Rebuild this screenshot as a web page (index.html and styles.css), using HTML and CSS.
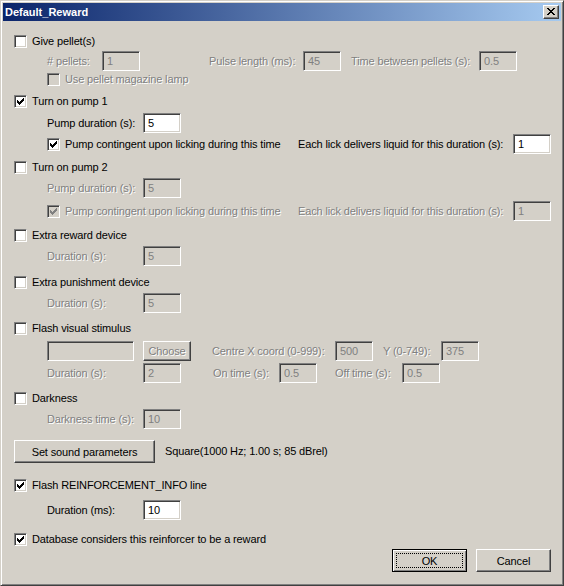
FILE: index.html
```html
<!DOCTYPE html>
<html>
<head>
<meta charset="utf-8">
<title>Default_Reward</title>
<link rel="stylesheet" href="styles.css">
</head>
<body>
<div class="window">
  <div class="titlebar">
    <span class="title">Default_Reward</span>
    <span class="close"><svg width="14" height="12" viewBox="0 0 14 12"><path d="M3 2h2v1h-2z M9 2h2v1h-2z M4 3h2v1h-2z M8 3h2v1h-2z M5 4h4v1h-4z M6 5h2v1h-2z M5 6h4v1h-4z M4 7h2v1h-2z M8 7h2v1h-2z M3 8h2v1h-2z M9 8h2v1h-2z" fill="#000"/></svg></span>
  </div>
  <div class="content">
    <div class="row crow mt14"><span class="cb"></span><span class="cl">Give pellet(s)</span></div>
    <div class="row frow mt3 ind">
      <span class="lbl dis-t w55"># pellets:</span><span class="edit dis">1</span>
      <span class="lbl dis-t ml69 w94">Pulse length (ms):</span><span class="edit dis">45</span>
      <span class="lbl dis-t ml10 w128">Time between pellets (s):</span><span class="edit dis">0.5</span>
    </div>
    <div class="row crow mt2 ind"><span class="cb dis"></span><span class="cl dis-t">Use pellet magazine lamp</span></div>

    <div class="row crow mt9"><span class="cb"><svg class="tick" width="11" height="11" viewBox="0 0 11 11"><path d="M8 2h1v1h-1z M7 3h2v1h-2z M2 4h1v1h-1z M6 4h3v1h-3z M2 5h2v1h-2z M5 5h3v1h-3z M2 6h5v1h-5z M3 7h3v1h-3z M4 8h1v1h-1z"/></svg></span><span class="cl">Turn on pump 1</span></div>
    <div class="row frow mt5 ind"><span class="lbl w96">Pump duration (s):</span><span class="edit">5</span></div>
    <div class="row frow mt1 ind">
      <span class="cb"><svg class="tick" width="11" height="11" viewBox="0 0 11 11"><path d="M8 2h1v1h-1z M7 3h2v1h-2z M2 4h1v1h-1z M6 4h3v1h-3z M2 5h2v1h-2z M5 5h3v1h-3z M2 6h5v1h-5z M3 7h3v1h-3z M4 8h1v1h-1z"/></svg></span><span class="cl w233">Pump contingent upon licking during this time</span>
      <span class="lbl w215">Each lick delivers liquid for this duration (s):</span><span class="edit">1</span>
    </div>

    <div class="row crow mt7"><span class="cb"></span><span class="cl">Turn on pump 2</span></div>
    <div class="row frow mt4 ind"><span class="lbl dis-t w96">Pump duration (s):</span><span class="edit dis">5</span></div>
    <div class="row frow mt3 ind">
      <span class="cb dis"><svg class="tick grey" width="11" height="11" viewBox="0 0 11 11"><path d="M8 2h1v1h-1z M7 3h2v1h-2z M2 4h1v1h-1z M6 4h3v1h-3z M2 5h2v1h-2z M5 5h3v1h-3z M2 6h5v1h-5z M3 7h3v1h-3z M4 8h1v1h-1z"/></svg></span><span class="cl dis-t w233">Pump contingent upon licking during this time</span>
      <span class="lbl dis-t w215">Each lick delivers liquid for this duration (s):</span><span class="edit dis">1</span>
    </div>

    <div class="row crow mt8"><span class="cb"></span><span class="cl">Extra reward device</span></div>
    <div class="row frow mt4 ind"><span class="lbl dis-t w96">Duration (s):</span><span class="edit dis">5</span></div>

    <div class="row crow mt10"><span class="cb"></span><span class="cl">Extra punishment device</span></div>
    <div class="row frow mt4 ind"><span class="lbl dis-t w96">Duration (s):</span><span class="edit dis">5</span></div>

    <div class="row crow mt9"><span class="cb"></span><span class="cl">Flash visual stimulus</span></div>
    <div class="row frow mt6 ind">
      <span class="edit dis wide"></span>
      <span class="btn choose dis-t">Choose</span>
      <span class="lbl dis-t ml21 w123">Centre X coord (0-999):</span><span class="edit dis">500</span>
      <span class="lbl dis-t ml10 w58">Y (0-749):</span><span class="edit dis">375</span>
    </div>
    <div class="row frow mt2 ind">
      <span class="lbl dis-t w96">Duration (s):</span><span class="edit dis">2</span>
      <span class="lbl dis-t ml32 w66">On time (s):</span><span class="edit dis">0.5</span>
      <span class="lbl dis-t ml18 w67">Off time (s):</span><span class="edit dis">0.5</span>
    </div>

    <div class="row crow mt9"><span class="cb"></span><span class="cl">Darkness</span></div>
    <div class="row frow mt4 ind"><span class="lbl dis-t w96">Darkness time (s):</span><span class="edit dis">10</span></div>

    <div class="row brow mt11">
      <span class="btn sound">Set sound parameters</span>
      <span class="lbl ml10">Square(1000 Hz; 1.00 s; 85 dBrel)</span>
    </div>

    <div class="row crow mt16"><span class="cb"><svg class="tick" width="11" height="11" viewBox="0 0 11 11"><path d="M8 2h1v1h-1z M7 3h2v1h-2z M2 4h1v1h-1z M6 4h3v1h-3z M2 5h2v1h-2z M5 5h3v1h-3z M2 6h5v1h-5z M3 7h3v1h-3z M4 8h1v1h-1z"/></svg></span><span class="cl">Flash REINFORCEMENT_INFO line</span></div>
    <div class="row frow mt8 ind"><span class="lbl w96">Duration (ms):</span><span class="edit">10</span></div>

    <div class="row crow mt13"><span class="cb"><svg class="tick" width="11" height="11" viewBox="0 0 11 11"><path d="M8 2h1v1h-1z M7 3h2v1h-2z M2 4h1v1h-1z M6 4h3v1h-3z M2 5h2v1h-2z M5 5h3v1h-3z M2 6h5v1h-5z M3 7h3v1h-3z M4 8h1v1h-1z"/></svg></span><span class="cl">Database considers this reinforcer to be a reward</span></div>
    <div class="row brow mt3 end">
      <span class="btn def"><span class="focus">OK</span></span>
      <span class="btn cancel">Cancel</span>
    </div>
  </div>
</div>
</body>
</html>
```

FILE: styles.css
```css
* { box-sizing: border-box; }
html, body { margin: 0; padding: 0; }
body {
  width: 564px;
  height: 586px;
  overflow: hidden;
  background: #D4D0C8;
  font-family: "Liberation Sans", Arial, sans-serif;
  font-size: 11px;
  letter-spacing: -0.13px;
  color: #000;
}
.window {
  width: 564px;
  height: 586px;
  background: #D4D0C8;
  border: 1px solid;
  border-color: #D4D0C8 #404040 #404040 #D4D0C8;
  box-shadow: inset 1px 1px #fff, inset -1px -1px #808080;
  padding: 2px;
  display: flex;
  flex-direction: column;
}
.titlebar {
  height: 18px;
  flex: none;
  background: linear-gradient(to right, #0A246A, #A6CAF0);
  display: flex;
  align-items: center;
  justify-content: space-between;
  padding: 0 2px;
}
.title {
  color: #fff;
  font-weight: bold;
  font-size: 11px;
  letter-spacing: 0;
  line-height: 18px;
}
.close {
  width: 16px;
  height: 14px;
  background: #D4D0C8;
  border: 1px solid;
  border-color: #fff #404040 #404040 #fff;
  box-shadow: inset -1px -1px #808080;
  display: block;
}
.close svg { display: block; }
.content {
  flex: 1;
  padding: 0 10px 0 11px;
}
.row {
  display: flex;
  align-items: center;
  white-space: nowrap;
}
.crow { height: 13px; }
.frow { height: 20px; }
.brow { height: 23px; }
.ind { padding-left: 33px; }
.end { justify-content: flex-end; gap: 9px; }

.mt1 { margin-top: 1px; }
.mt2 { margin-top: 2px; }
.mt3 { margin-top: 3px; }
.mt4 { margin-top: 4px; }
.mt5 { margin-top: 5px; }
.mt6 { margin-top: 6px; }
.mt7 { margin-top: 7px; }
.mt8 { margin-top: 8px; }
.mt9 { margin-top: 9px; }
.mt10 { margin-top: 10px; }
.mt11 { margin-top: 11px; }
.mt13 { margin-top: 13px; }
.mt14 { margin-top: 14px; }
.mt16 { margin-top: 16px; }

.ml10 { margin-left: 10px; }
.ml18 { margin-left: 18px; }
.ml21 { margin-left: 21px; }
.ml32 { margin-left: 32px; }
.ml69 { margin-left: 69px; }

.w55 { width: 55px; }
.w58 { width: 58px; }
.w66 { width: 66px; }
.w67 { width: 67px; }
.w94 { width: 94px; }
.w96 { width: 96px; }
.w123 { width: 123px; }
.w128 { width: 128px; }
.w215 { width: 215px; }
.w233 { width: 233px; }

.lbl { flex: none; line-height: 13px; }
.cl { flex: none; margin-left: 5px; line-height: 13px; }
.dis-t { color: #808080; text-shadow: 1px 1px 0 #fff; }

.cb {
  width: 13px;
  height: 13px;
  flex: none;
  border: 1px solid;
  border-color: #808080 #fff #fff #808080;
  box-shadow: inset 1px 1px #404040, inset -1px -1px #D4D0C8;
  background: #fff;
}
.cb.dis { background: #D4D0C8; }
.tick { display: block; fill: #000; }
.tick.grey { fill: #808080; }

.edit {
  width: 38px;
  height: 20px;
  flex: none;
  border: 1px solid;
  border-color: #808080 #fff #fff #808080;
  box-shadow: inset 1px 1px #404040, inset -1px -1px #D4D0C8;
  background: #fff;
  padding: 0 4px;
  display: flex;
  align-items: center;
}
.edit.dis { background: #D4D0C8; color: #808080; }
.edit.wide { width: 87px; }

.btn {
  height: 23px;
  flex: none;
  border: 1px solid;
  border-color: #fff #404040 #404040 #fff;
  box-shadow: inset -1px -1px #808080;
  background: #D4D0C8;
  display: flex;
  align-items: center;
  justify-content: center;
}
.btn.choose { width: 48px; height: 20px; margin-left: 9px; }
.btn.sound { width: 141px; }
.btn.cancel { width: 75px; }
.btn.def {
  width: 75px;
  border-color: #000;
  box-shadow: inset 1px 1px #fff, inset -1px -1px #808080;
  padding: 3px;
  align-items: stretch;
}
.focus {
  flex: 1;
  border: 1px dotted #000;
  display: flex;
  align-items: center;
  justify-content: center;
}
```
